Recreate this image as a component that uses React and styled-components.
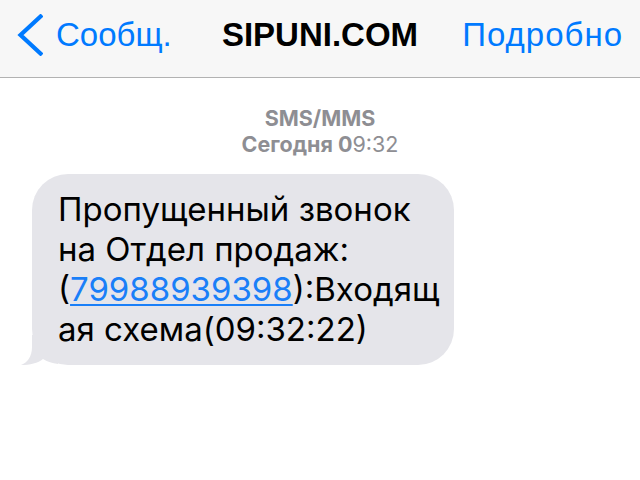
import React from "react";
import styled, { createGlobalStyle } from "styled-components";

const Global = createGlobalStyle`
  html, body { margin: 0; padding: 0; background: #ffffff; }
  body { font-family: "Liberation Sans", Arial, sans-serif; }
`;

const Page = styled.div`
  width: 640px;
  height: 480px;
  overflow: hidden;
  background: #ffffff;
`;

const NavBar = styled.header`
  box-sizing: border-box;
  height: 78px;
  border-bottom: 1px solid #b2b2b2;
  background: #f7f7f7;
  display: grid;
  grid-template-columns: 1fr auto 1fr;
  align-items: center;
  padding: 0 17px 8px 17px;
`;

const Back = styled.div`
  display: flex;
  align-items: center;
  gap: 13px;
  color: #007aff;
  font-size: 33px;
`;

const Title = styled.div`
  font-size: 33px;
  font-weight: 700;
  color: #000;
`;

const Action = styled.div`
  justify-self: end;
  color: #007aff;
  font-size: 33px;
  letter-spacing: 1px;
`;

const Meta = styled.div`
  margin-top: 27px;
  text-align: center;
  color: #8e8e93;
  font-family: Inter, "Liberation Sans", sans-serif;
  font-size: 21.5px;
  line-height: 26px;
`;

const Bold = styled.span`
  font-weight: 700;
`;

const Thread = styled.div`
  padding: 17px 0 0 32px;
`;

const Bubble = styled.div`
  position: relative;
  width: 422px;
  box-sizing: border-box;
  background: #e5e5ea;
  border-radius: 36px;
  padding: 15px 8px 16px 26px;
  font-family: Inter, "Liberation Sans", sans-serif;
  font-size: 33px;
  line-height: 40px;
  color: #000;
  overflow-wrap: anywhere;
`;

const Tail = styled.svg`
  position: absolute;
  left: -12px;
  bottom: 0;
  width: 40px;
  height: 30px;
`;

const Phone = styled.a`
  color: #1a7ff8;
  text-decoration: underline;
  text-decoration-thickness: 2px;
  text-underline-offset: 3px;
`;

export default function App() {
  return (
    <Page>
      <Global />
      <NavBar>
        <Back>
          <svg width="26" height="42" viewBox="0 0 26 42">
            <path d="M23.5 2.5 L3.5 21 L23.5 39.5" fill="none" stroke="#007aff" strokeWidth="4.2" strokeLinecap="square" />
          </svg>
          <span>Сообщ.</span>
        </Back>
        <Title>SIPUNI.COM</Title>
        <Action>Подробно</Action>
      </NavBar>
      <Meta>
        <div><Bold>SMS/MMS</Bold></div>
        <div><Bold>Сегодня 0</Bold>9:32</div>
      </Meta>
      <Thread>
        <Bubble>
          <Tail viewBox="0 0 40 30">
            <path d="M12 0 L12 12 C12 22 7 28 1 30 C10 30 18 28 23 24 C28 27 32 28 38 29 L38 0 Z" fill="#e5e5ea" />
          </Tail>
          Пропущенный звонок на Отдел продаж: (<Phone>79988939398</Phone>):Входящая схема(09:32:22)
        </Bubble>
      </Thread>
    </Page>
  );
}
